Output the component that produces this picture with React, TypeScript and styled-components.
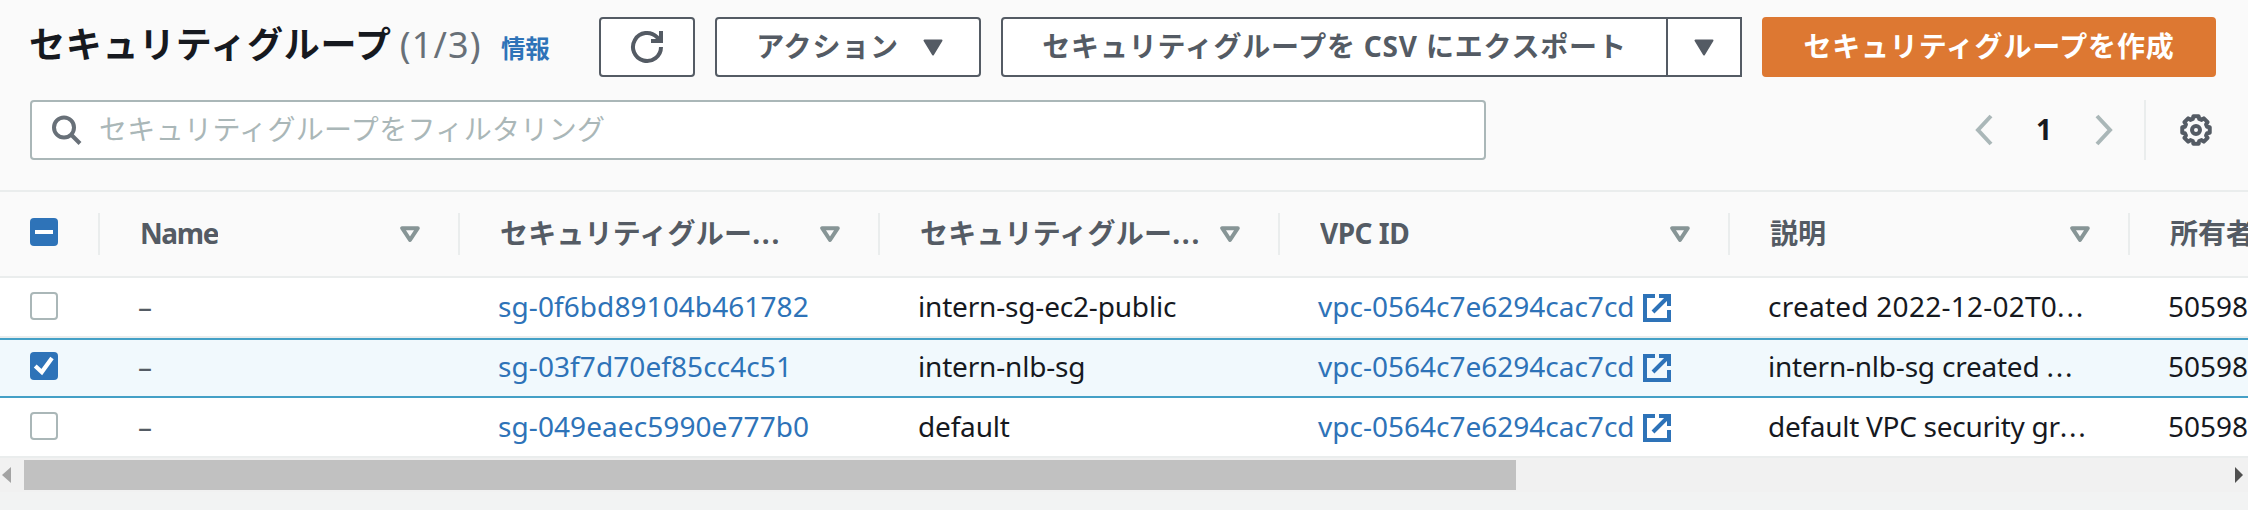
import React from "react";
import styled, { createGlobalStyle, css } from "styled-components";

const Global = createGlobalStyle`
  * { box-sizing: border-box; }
  body {
    margin: 0;
    height: 510px;
    overflow: hidden;
    background: #f2f3f3;
    color: #16191f;
    font: 400 28px/40px "Noto Sans", "Noto Sans CJK JP", sans-serif;
  }
`;

const Panel = styled.main`
  width: 2248px;
  overflow: hidden;
`;

const Header = styled.header`
  height: 192px;
  padding: 17px 32px 0 30px;
  background: #fafafa;
  border-bottom: 2px solid #eaeded;
`;

const TitleRow = styled.div`
  display: flex;
  height: 60px;
  gap: 20px;
`;

const Title = styled.h1`
  display: flex;
  align-items: baseline;
  margin: 0 0 0 -1px;
  width: 550px;
  font-size: 36px;
  line-height: 56px;
  letter-spacing: 0.7px;
  white-space: nowrap;
`;

const Count = styled.span`
  margin-left: 8px;
  font-weight: 400;
  letter-spacing: 1.2px;
  color: #687078;
`;

const InfoLink = styled.a`
  margin-left: 19px;
  font-size: 24.5px;
  letter-spacing: 0;
  color: #2e73b8;
`;

const buttonFrame = css`
  display: flex;
  align-items: center;
  justify-content: center;
  height: 60px;
  padding: 0;
  border: 2px solid #545b64;
  background: #fff;
  color: #545b64;
  font: inherit;
  font-weight: 700;
  letter-spacing: 0.8px;
  white-space: nowrap;
`;

const ButtonText = styled.span`
  display: block;
  padding-bottom: 3px;
`;

const Button = styled.button<{ $width: number }>`
  ${buttonFrame}
  width: ${(p) => p.$width}px;
  gap: 24px;
  border-radius: 4px;
`;

const MenuButton = styled(Button)`
  padding-left: 3px;
`;

const PrimaryButton = styled(Button)`
  border-color: #dd7832;
  background: #dd7832;
  color: #fff;
`;

const SplitButton = styled.div`
  display: flex;
`;

const SplitMain = styled.button`
  ${buttonFrame}
  width: 667px;
  border-radius: 4px 0 0 4px;
`;

const SplitToggle = styled.button`
  ${buttonFrame}
  width: 76px;
  margin-left: -2px;
`;

const ToolRow = styled.div`
  display: flex;
  align-items: center;
  height: 60px;
  margin-top: 23px;
`;

const Search = styled.label`
  display: flex;
  align-items: center;
  width: 1456px;
  height: 60px;
  padding-left: 20px;
  gap: 17px;
  border: 2px solid #aab7b8;
  border-radius: 4px;
  background: #fff;
`;

const SearchInput = styled.input`
  flex: 1;
  border: 0;
  padding: 0 0 2px;
  outline: 0;
  font: inherit;
  letter-spacing: 0.35px;
  background: transparent;
  &::placeholder { color: #aab7b8; opacity: 1; }
`;

const Pager = styled.nav`
  display: flex;
  align-items: center;
  justify-content: space-between;
  width: 138px;
  margin-left: auto;
`;

const PageNumber = styled.span`
  padding-bottom: 2px;
  font-weight: 700;
`;

const Preferences = styled.div`
  display: flex;
  align-items: center;
  height: 60px;
  margin: 0 4px 0 31px;
  padding-left: 34px;
  border-left: 2px solid #eaeded;
`;

const rowGrid = css`
  display: grid;
  grid-template-columns: 98px 360px 420px 400px 450px 400px 400px;
  width: 2528px;
`;

const HeadRow = styled.div`
  ${rowGrid}
  height: 86px;
  padding-top: 21px;
  background: #fafafa;
  border-bottom: 2px solid #eaeded;
  align-items: start;
`;

const HeadCell = styled.div`
  display: flex;
  align-items: center;
  justify-content: space-between;
  height: 42px;
  padding: 0 38px 0 40px;
  border-left: 2px solid #eaeded;
  font-weight: 700;
  color: #545b64;
`;

const HeadLabel = styled.span<{ $spacing: number }>`
  padding-bottom: 3px;
  overflow: hidden;
  letter-spacing: ${(p) => p.$spacing}px;
  white-space: nowrap;
`;

const Row = styled.div<{ $selected?: boolean }>`
  ${rowGrid}
  height: 60px;
  padding-top: 8px;
  align-items: start;
  border-bottom: 2px solid #eaeded;
  background: #fff;
  ${(p) =>
    p.$selected &&
    css`
      padding-top: 6px;
      background: #f1f9fd;
      border-top: 2px solid #44a0c6;
      border-bottom-color: #44a0c6;
    `}
`;

const CheckCell = styled.div<{ $offset: number }>`
  display: flex;
  padding: ${(p) => p.$offset}px 0 0 30px;
`;

const Cell = styled.div<{ $spacing?: number }>`
  display: flex;
  align-items: center;
  gap: 8px;
  padding-left: 40px;
  letter-spacing: ${(p) => p.$spacing ?? 0}px;
  white-space: nowrap;

  svg { margin-top: 4px; }
`;

const Link = styled.a`
  color: #2e73b8;
`;

const EmptyValue = styled.span`
  color: #545b64;
`;

const Ellipsis = styled.span`
  letter-spacing: 1.8px;
`;

const Scrollbar = styled.div`
  display: flex;
  align-items: center;
  height: 34px;
  background: #f1f1f1;
`;

const ScrollThumb = styled.div`
  width: 1492px;
  height: 30px;
  margin: 0 auto 0 13px;
  background: #c1c1c1;
`;

const Caret = () => (
  <svg width="20" height="17" viewBox="0 0 20 17">
    <path d="M1.5 1.5h17L10 15.5z" fill="#545b64" stroke="#545b64" strokeWidth="2" strokeLinejoin="round" />
  </svg>
);

const SortIcon = () => (
  <svg width="20" height="17" viewBox="0 0 20 17">
    <path d="M2.2 2.2h15.6L10 14z" fill="none" stroke="#879596" strokeWidth="4" strokeLinejoin="round" />
  </svg>
);

const RefreshIcon = () => (
  <svg width="34" height="34" viewBox="0 0 34 34" fill="none" stroke="#545b64" strokeWidth="4">
    <path d="M31 17A14 14 0 1 1 27 7.2L30 10.5M31 1v10H21" />
  </svg>
);

const SearchIcon = () => (
  <svg width="30" height="30" viewBox="0 0 30 30" fill="none" stroke="#687078" strokeWidth="4">
    <circle cx="12" cy="12.5" r="10" />
    <path d="M19 19.5l9 9" />
  </svg>
);

const Chevron = ({ right }: { right?: boolean }) => (
  <svg width="18" height="32" viewBox="0 0 18 32" fill="none" stroke="#aab7b8" strokeWidth="4">
    <path d={right ? "M2 2l13 14L2 30" : "M16 2L3 16l13 14"} />
  </svg>
);

const gearOutline = Array.from({ length: 8 }, (_, i) => i * 45)
  .flatMap((a) => [[a - 11, 14], [a + 11, 14], [a + 16, 11.5], [a + 29, 11.5]])
  .map(([angle, r]) => {
    const t = (angle * Math.PI) / 180;
    return `${(16 + r * Math.cos(t)).toFixed(2)},${(16 + r * Math.sin(t)).toFixed(2)}`;
  })
  .join(" ");

const GearIcon = () => (
  <svg width="32" height="32" viewBox="0 0 32 32" fill="none" stroke="#545b64" strokeWidth="4">
    <polygon points={gearOutline} strokeLinejoin="round" />
    <circle cx="16" cy="16" r="4" />
  </svg>
);

const ExternalIcon = () => (
  <svg width="28" height="28" viewBox="0 0 28 28" fill="none" stroke="#2e73b8" strokeWidth="4">
    <path d="M12 2H2v24h24V16M16 2h10v10M26 2L10 18" />
  </svg>
);

type CheckState = "on" | "off" | "mixed";

const Checkbox = ({ state }: { state: CheckState }) => (
  <svg width="28" height="28" viewBox="0 0 28 28" fill="none">
    {state === "off" ? (
      <rect x="1" y="1" width="26" height="26" rx="3" fill="#fff" stroke="#aab7b8" strokeWidth="2" />
    ) : (
      <rect width="28" height="28" rx="4" fill="#2e73b8" />
    )}
    {state === "mixed" && <path d="M5 14h18" stroke="#fff" strokeWidth="4" />}
    {state === "on" && <path d="M5.2 14l6.6 6L22 6" stroke="#fff" strokeWidth="4.2" />}
  </svg>
);

const columns = [
  { label: "Name", spacing: -1.4 },
  { label: "セキュリティグルー", spacing: 0.2, clipped: true },
  { label: "セキュリティグルー", spacing: 0.2, clipped: true },
  { label: "VPC ID", spacing: -0.5 },
  { label: "説明", spacing: 0 },
  { label: "所有者", spacing: 0 },
];

const groups = [
  { id: "sg-0f6bd89104b461782", name: "intern-sg-ec2-public", note: "created 2022-12-02T0", noteSpacing: 0.25 },
  { id: "sg-03f7d70ef85cc4c51", name: "intern-nlb-sg", note: "intern-nlb-sg created ", noteSpacing: -0.22, selected: true },
  { id: "sg-049eaec5990e777b0", name: "default", note: "default VPC security gr", noteSpacing: -0.28 },
];

export default function App() {
  return (
    <>
      <Global />
      <Panel>
        <Header>
          <TitleRow>
            <Title>
              セキュリティグループ<Count>(1/3)</Count>
              <InfoLink>情報</InfoLink>
            </Title>
            <Button $width={96}><RefreshIcon /></Button>
            <MenuButton $width={266}><ButtonText>アクション</ButtonText><Caret /></MenuButton>
            <SplitButton>
              <SplitMain><ButtonText>セキュリティグループを CSV にエクスポート</ButtonText></SplitMain>
              <SplitToggle><Caret /></SplitToggle>
            </SplitButton>
            <PrimaryButton $width={454}><ButtonText>セキュリティグループを作成</ButtonText></PrimaryButton>
          </TitleRow>
          <ToolRow>
            <Search>
              <SearchIcon />
              <SearchInput placeholder="セキュリティグループをフィルタリング" />
            </Search>
            <Pager>
              <Chevron />
              <PageNumber>1</PageNumber>
              <Chevron right />
            </Pager>
            <Preferences><GearIcon /></Preferences>
          </ToolRow>
        </Header>
        <HeadRow>
          <CheckCell $offset={5}><Checkbox state="mixed" /></CheckCell>
          {columns.map((column, i) => (
            <HeadCell key={i}>
              <HeadLabel $spacing={column.spacing}>
                {column.label}
                {column.clipped && <Ellipsis>...</Ellipsis>}
              </HeadLabel>
              <SortIcon />
            </HeadCell>
          ))}
        </HeadRow>
        {groups.map((g) => (
          <Row key={g.id} $selected={g.selected}>
            <CheckCell $offset={6}><Checkbox state={g.selected ? "on" : "off"} /></CheckCell>
            <Cell><EmptyValue>–</EmptyValue></Cell>
            <Cell $spacing={0.08}><Link>{g.id}</Link></Cell>
            <Cell $spacing={-0.18}>{g.name}</Cell>
            <Cell><Link>vpc-0564c7e6294cac7cd</Link><ExternalIcon /></Cell>
            <Cell $spacing={g.noteSpacing}><span>{g.note}<Ellipsis>...</Ellipsis></span></Cell>
            <Cell>50598</Cell>
          </Row>
        ))}
        <Scrollbar>
          <svg width="11" height="16" viewBox="0 0 11 16"><path d="M2 8l9-8v16z" fill="#a3a3a3" /></svg>
          <ScrollThumb />
          <svg width="14" height="16" viewBox="0 0 14 16"><path d="M9 8L1 0v16z" fill="#505050" /></svg>
        </Scrollbar>
      </Panel>
    </>
  );
}
